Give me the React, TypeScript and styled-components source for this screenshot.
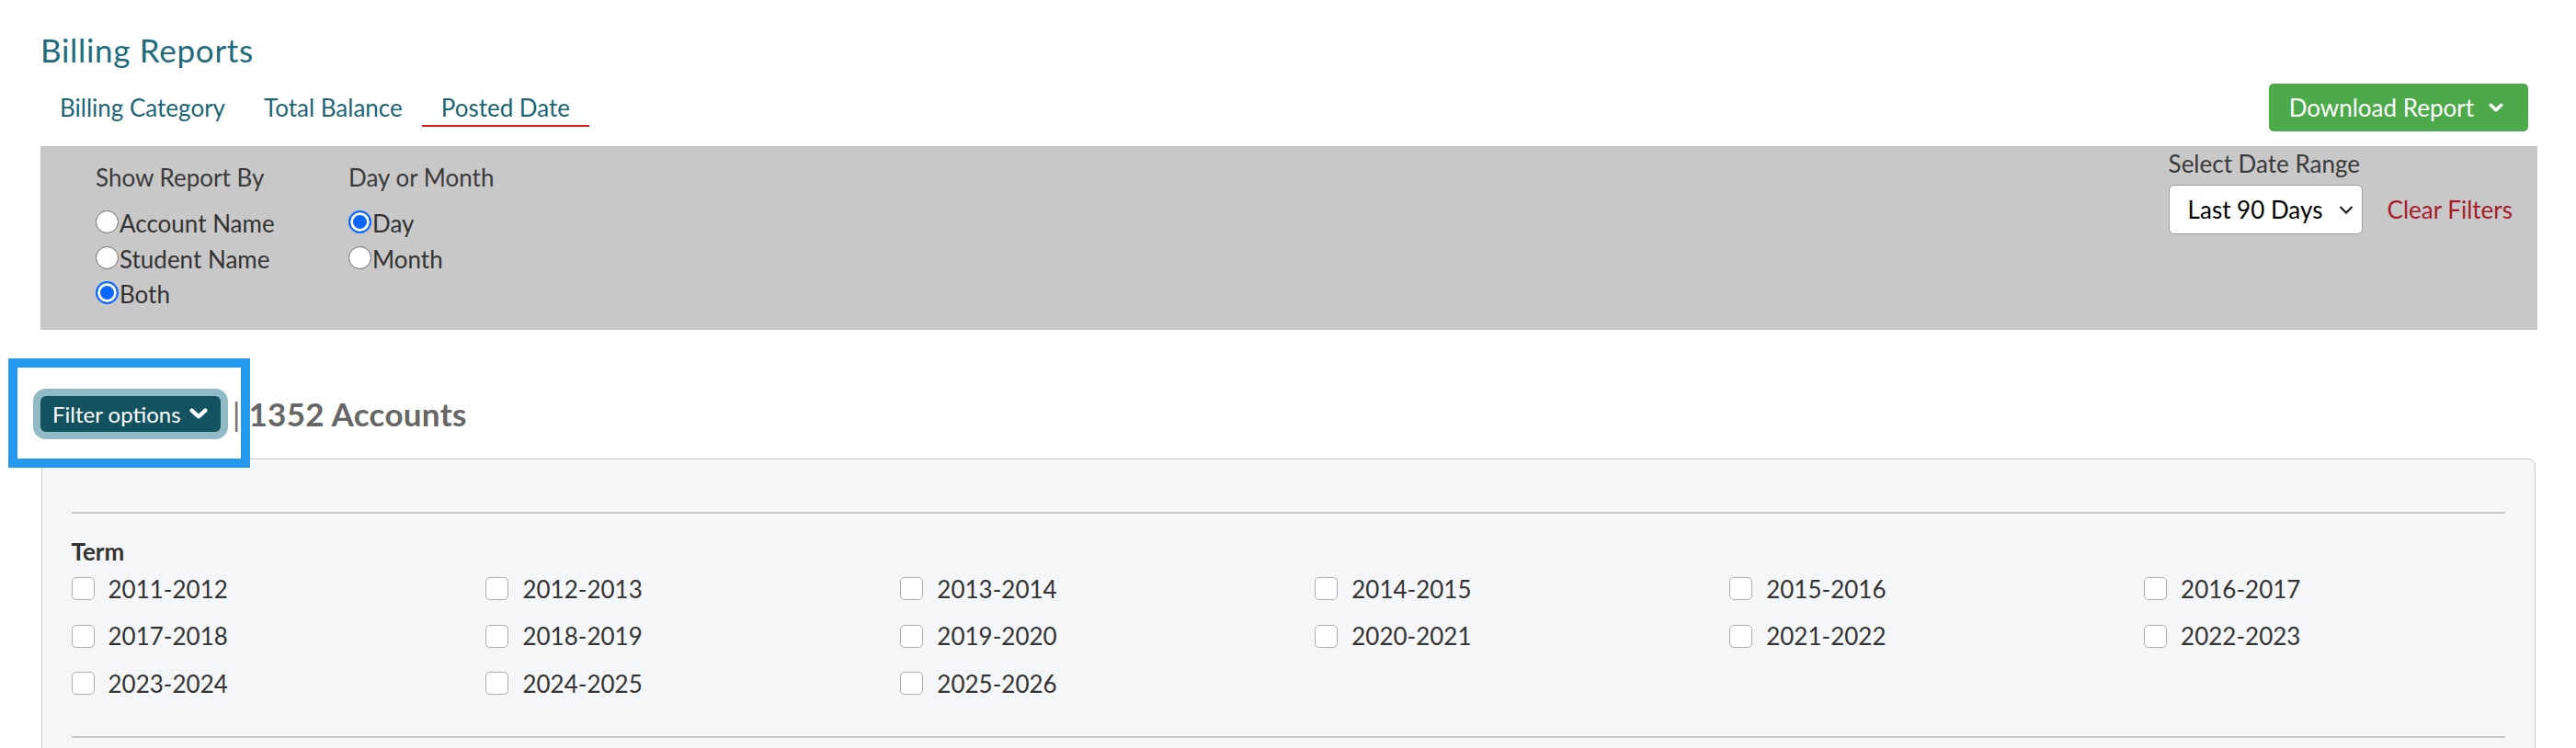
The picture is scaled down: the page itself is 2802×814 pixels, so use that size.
import { FC } from 'react';
import styled, { createGlobalStyle } from 'styled-components';

const GlobalStyle = createGlobalStyle`
body{
    margin: 0;
    background: #fff;
    font-family: Lato, "Open Sans", sans-serif;
}
`;

const Page = styled.div`
padding: 33px 42px 0 44px;
`;

const Title = styled.h1`
margin: 0 0 16px;
font-size: 35px;
letter-spacing: 0.7px;
line-height: 42px;
font-weight: 400;
color: #1d6b7b;
`;

const HeaderRow = styled.div`
display: flex;
justify-content: space-between;
align-items: flex-end;
margin-bottom: 16px;
`;

const Tabs = styled.nav`
display: flex;
margin-bottom: 5px;
`;

const Tab = styled.a<{ $active?: boolean }>`
padding: 0 21px 4px;
font-size: 26px;
line-height: 30px;
color: #1b6676;
border-bottom: 2px solid ${(p) => (p.$active ? '#e3151d' : 'transparent')};
cursor: pointer;
`;

const DownloadButton = styled.button`
display: flex;
align-items: center;
gap: 16px;
height: 52px;
margin-right: 10px;
padding: 0 27px 0 22px;
border: none;
border-radius: 5px;
background: #4daa4b;
color: #fff;
font-family: inherit;
font-size: 26px;
`;

const Panel = styled.div`
display: flex;
justify-content: space-between;
align-items: flex-start;
background: #c8c8c8;
padding: 4px 27px 19px 60px;
color: #3a3a3a;
font-size: 26px;
line-height: 30px;
`;

const OptionGroups = styled.div`
display: flex;
padding-top: 15px;
`;

const OptionColumn = styled.div<{ $width?: number }>`
width: ${(p) => (p.$width ? `${p.$width}px` : 'auto')};
`;

const GroupHeading = styled.div`
margin-bottom: 16px;
`;

const RadioLabel = styled.label`
display: flex;
align-items: center;
height: 38.5px;
color: #333;
`;

const Radio = styled.input.attrs({ type: 'radio' })`
appearance: none;
margin: -3px 1px 0 0;
width: 25px;
height: 25px;
border-radius: 50%;
border: 1.5px solid #6d6d6d;
background: #fff;
&:checked{
    border: 2.5px solid #0b66ff;
    background: #0b66ff;
    box-shadow: inset 0 0 0 3px #fff;
}
`;

const DateRange = styled.div`
display: flex;
flex-direction: column;
`;

const DateControls = styled.div`
display: flex;
align-items: center;
gap: 27px;
margin-top: 8px;
`;

const SelectBox = styled.div`
position: relative;
svg{
    position: absolute;
    right: 10px;
    top: 22px;
    pointer-events: none;
}
`;

const Select = styled.select`
appearance: none;
width: 211px;
height: 54px;
padding: 0 0 0 20px;
border: 1.5px solid #9b9b9b;
border-radius: 6px;
background: #fff;
color: #000;
font-family: inherit;
font-size: 26px;
`;

const ClearLink = styled.a`
color: #a61c2b;
cursor: pointer;
`;

const FilterRow = styled.div`
position: relative;
display: flex;
align-items: center;
margin: 72px 0 29px;
`;

const FilterButton = styled.button`
display: flex;
align-items: center;
gap: 9px;
height: 39px;
padding: 0 14px 0 13px;
border: none;
border-radius: 6px;
background: #12535f;
color: #fff;
font-family: inherit;
font-size: 24px;
box-shadow: 0 0 0 8px #8fbac6;
`;

const Count = styled.div`
margin-left: 13px;
font-size: 35px;
line-height: 39px;
letter-spacing: 0.3px;
font-weight: 700;
color: #666;
span{
    font-weight: 400;
    color: #707070;
}
`;

const Highlight = styled.div`
position: absolute;
left: -35px;
top: -41px;
width: 263px;
height: 119px;
box-sizing: border-box;
border: 10px solid #2499ee;
pointer-events: none;
`;

const Card = styled.div`
margin: 0 2px 0 1px;
padding: 57px 32px 0 31.5px;
height: 340px;
border: 1.5px solid #cccccc;
border-radius: 8px;
background: #f5f6f8;
`;

const FilterSection = styled.div`
border-top: 2px solid #c9c9c9;
border-bottom: 2px solid #c9c9c9;
padding: 27px 0 31.5px;
`;

const SectionTitle = styled.div`
font-size: 26px;
line-height: 29.5px;
font-weight: 700;
color: #333;
`;

const TermGrid = styled.div`
display: grid;
grid-template-columns: repeat(6, 1fr);
grid-auto-rows: 51.5px;
column-gap: 58px;
`;

const CheckLabel = styled.label`
display: flex;
align-items: center;
gap: 15px;
font-size: 26px;
color: #333;
`;

const Checkbox = styled.input.attrs({ type: 'checkbox' })`
appearance: none;
margin: 0;
width: 25px;
height: 25px;
border: 1.5px solid #adadad;
border-radius: 5px;
background: #fff;
`;

const Chevron: FC<{ width: number; height: number; stroke?: number }> = ({ width, height, stroke = 4 }) => (
    <svg width={width} height={height} viewBox={`0 0 ${width} ${height}`}>
        <polyline
            points={`${stroke / 2 + 0.5},${stroke / 2 + 0.5} ${width / 2},${height - stroke / 2 - 0.5} ${width - stroke / 2 - 0.5},${stroke / 2 + 0.5}`}
            fill="none"
            stroke="#fff"
            strokeWidth={stroke}
            strokeLinecap="round"
            strokeLinejoin="round"
        />
    </svg>
);

const terms = [
    '2011-2012', '2012-2013', '2013-2014', '2014-2015', '2015-2016', '2016-2017',
    '2017-2018', '2018-2019', '2019-2020', '2020-2021', '2021-2022', '2022-2023',
    '2023-2024', '2024-2025', '2025-2026',
];

const App: FC = () => {
    return (
        <Page>
            <GlobalStyle />
            <Title>Billing Reports</Title>
            <HeaderRow>
                <Tabs>
                    <Tab>Billing Category</Tab>
                    <Tab>Total Balance</Tab>
                    <Tab $active>Posted Date</Tab>
                </Tabs>
                <DownloadButton>
                    Download Report <Chevron width={16} height={10} stroke={3.6} />
                </DownloadButton>
            </HeaderRow>

            <Panel>
                <OptionGroups>
                    <OptionColumn $width={275}>
                        <GroupHeading>Show Report By</GroupHeading>
                        <RadioLabel><Radio name="by" />Account Name</RadioLabel>
                        <RadioLabel><Radio name="by" />Student Name</RadioLabel>
                        <RadioLabel><Radio name="by" defaultChecked />Both</RadioLabel>
                    </OptionColumn>
                    <OptionColumn>
                        <GroupHeading>Day or Month</GroupHeading>
                        <RadioLabel><Radio name="period" defaultChecked />Day</RadioLabel>
                        <RadioLabel><Radio name="period" />Month</RadioLabel>
                    </OptionColumn>
                </OptionGroups>
                <DateRange>
                    <div>Select Date Range</div>
                    <DateControls>
                        <SelectBox>
                            <Select defaultValue="90">
                                <option value="90">Last 90 Days</option>
                            </Select>
                            <svg width="16" height="11" viewBox="0 0 16 11">
                                <polyline points="1.5,2 8,8.5 14.5,2" fill="none" stroke="#111" strokeWidth="2" />
                            </svg>
                        </SelectBox>
                        <ClearLink>Clear Filters</ClearLink>
                    </DateControls>
                </DateRange>
            </Panel>

            <FilterRow>
                <FilterButton>
                    Filter options <Chevron width={20} height={12} stroke={4.2} />
                </FilterButton>
                <Count><span>|</span> 1352 Accounts</Count>
                <Highlight />
            </FilterRow>

            <Card>
                <FilterSection>
                    <SectionTitle>Term</SectionTitle>
                    <TermGrid>
                        {terms.map((term) => (
                            <CheckLabel key={term}>
                                <Checkbox />
                                {term}
                            </CheckLabel>
                        ))}
                    </TermGrid>
                </FilterSection>
            </Card>
        </Page>
    );
};

export default App;
